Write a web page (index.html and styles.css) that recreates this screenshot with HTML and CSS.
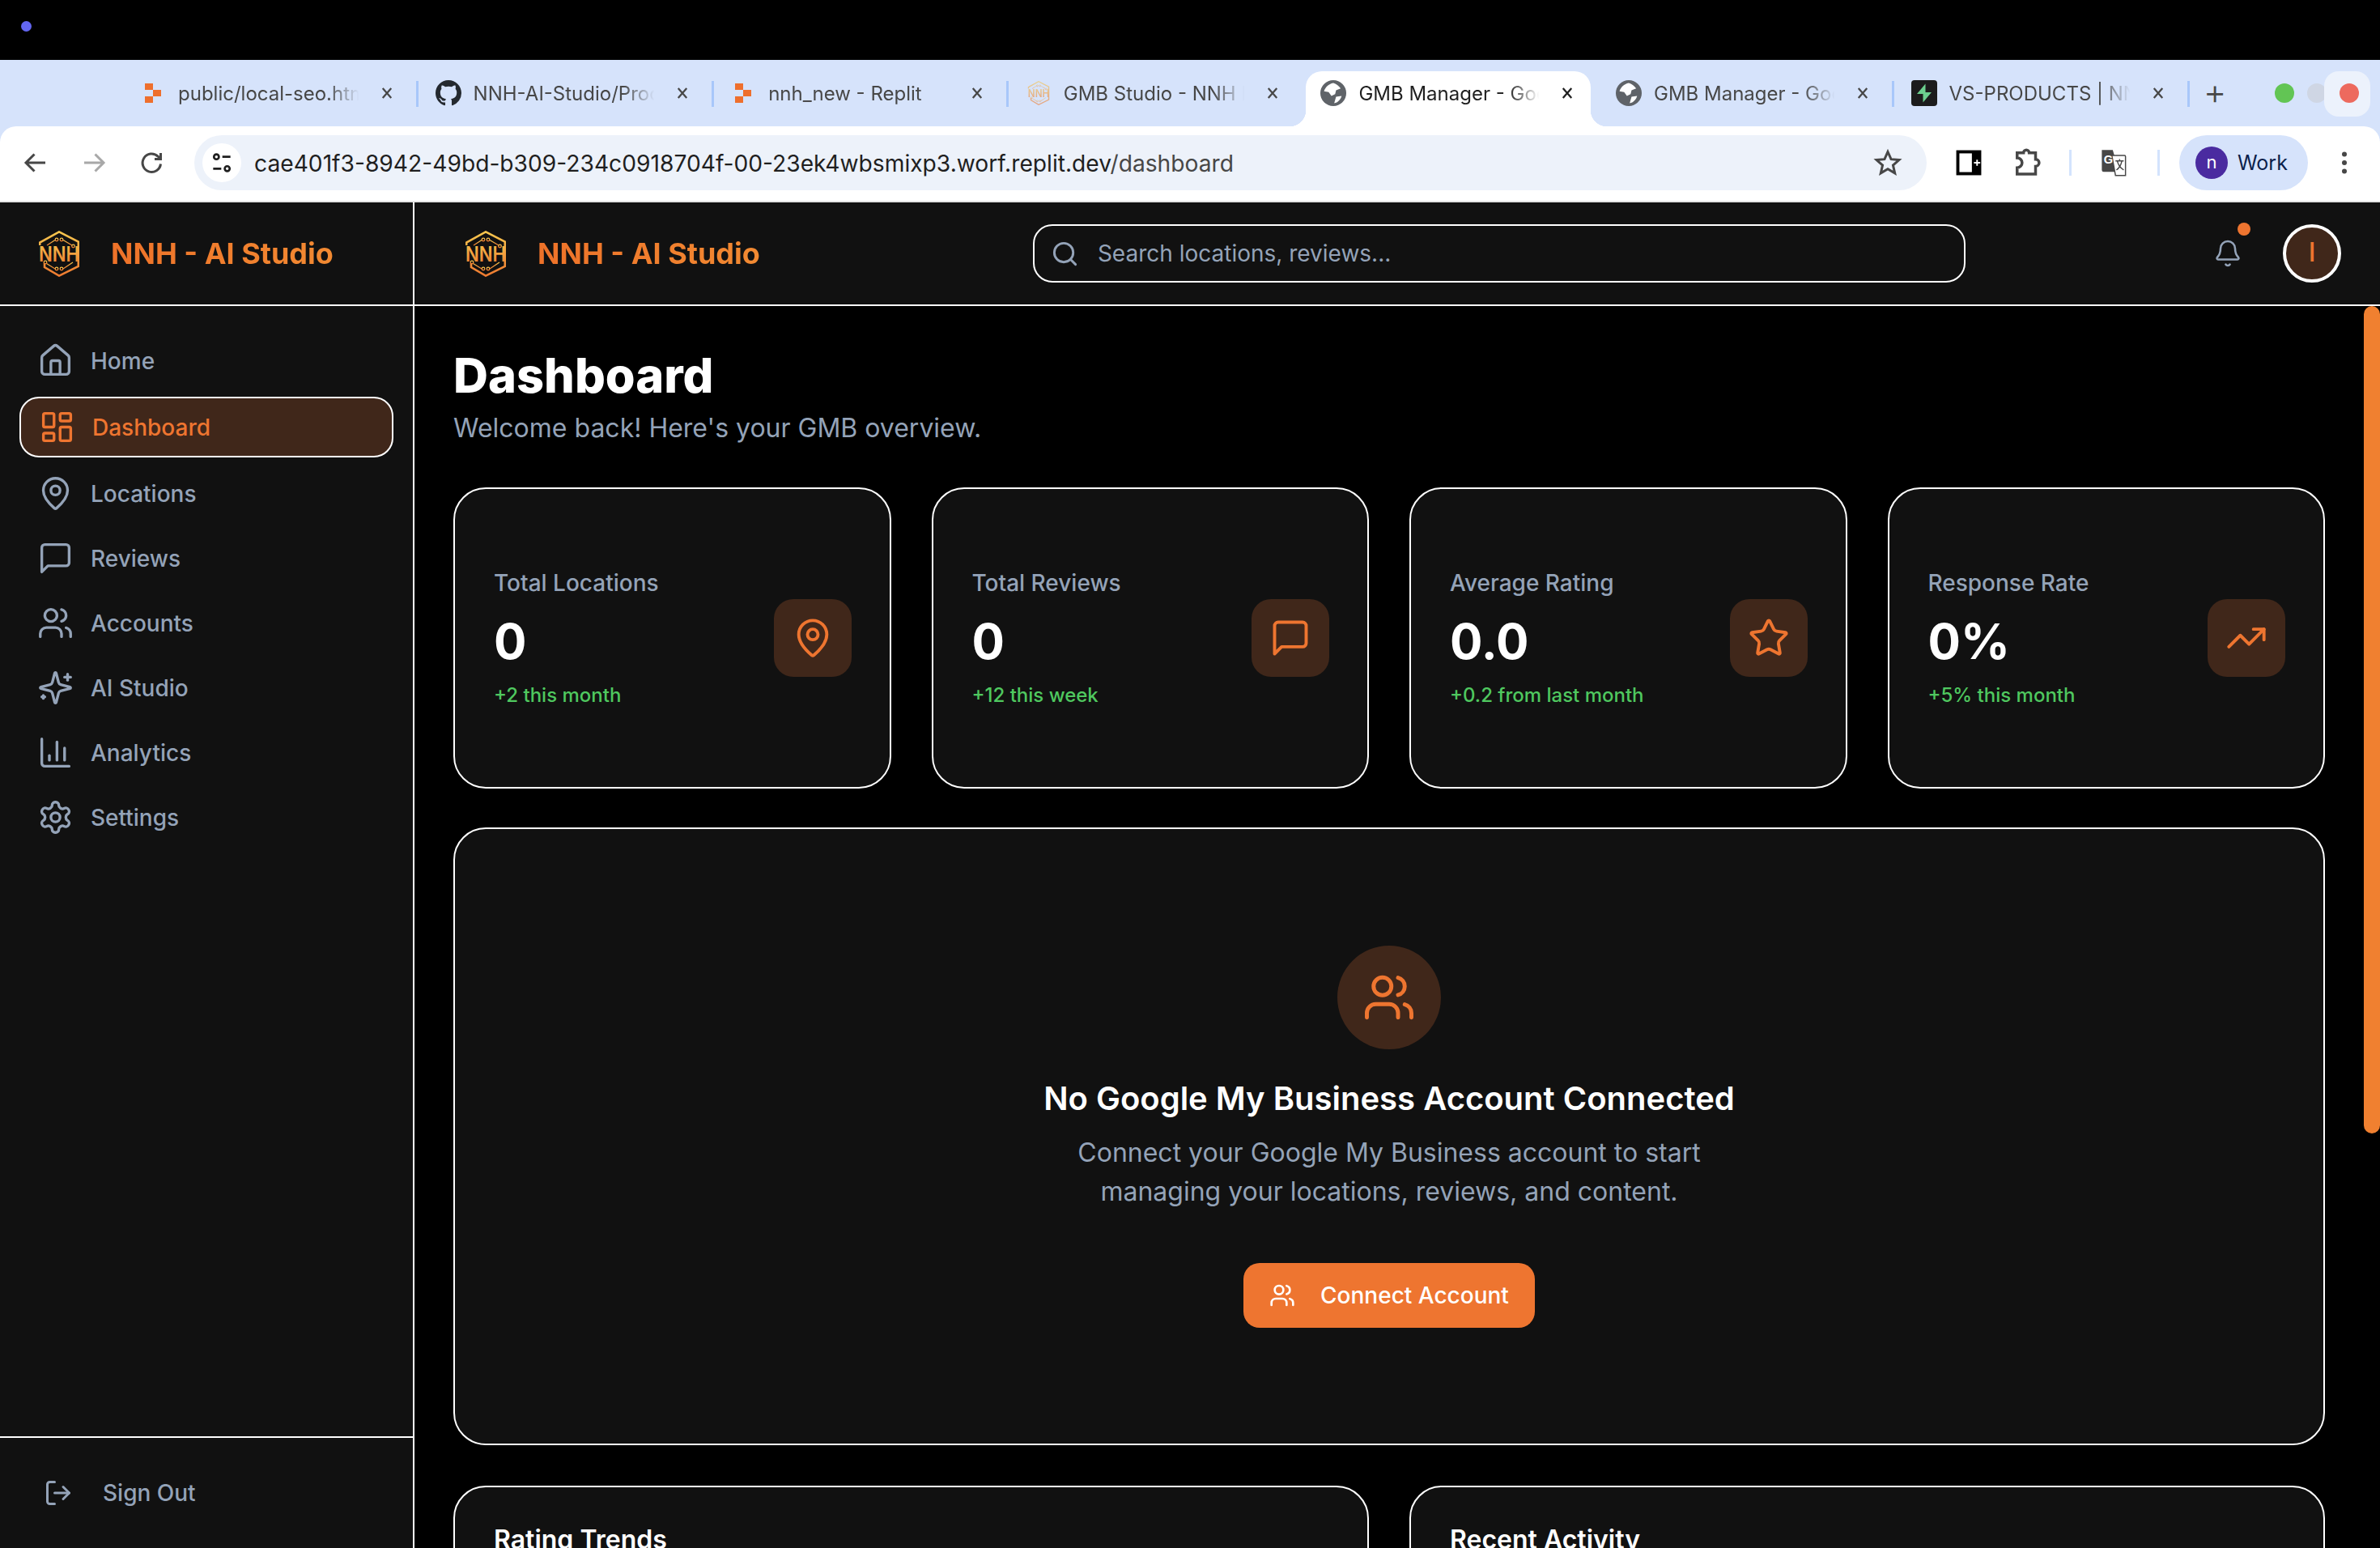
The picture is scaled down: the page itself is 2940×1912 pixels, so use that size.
FILE: index.html
```html
<!DOCTYPE html>
<html lang="en">

<head>
    <meta charset="UTF-8">
    <title>GMB Manager - Google My Business</title>
    <link rel="stylesheet" href="styles.css">
</head>

<body>
    <!-- shared icons -->
    <svg class="defs" aria-hidden="true">
        <defs>
            <linearGradient id="logoGrad" x1="0" y1="0" x2="0" y2="1">
                <stop offset="0" stop-color="#f7c64e" />
                <stop offset="1" stop-color="#ee7a30" />
            </linearGradient>
            <symbol id="logo" viewBox="0 0 50 57">
                <g fill="none" stroke="url(#logoGrad)" stroke-width="2.6">
                    <path d="M1.200 18V14.500L25 1.400 48.800 13.500V44L25 55.600 7 45V40" />
                    <g stroke-width="1.300">
                        <path d="M10 18l10-6.500M30 11.500L41 18" />
                        <path d="M9.500 40.500L20 47M30 47l12-8" />
                        <circle cx="22" cy="11" r="1.800" />
                        <circle cx="28" cy="11" r="1.800" />
                        <circle cx="42.500" cy="19" r="1.800" />
                        <circle cx="8" cy="39" r="1.800" />
                        <circle cx="22" cy="47" r="1.800" />
                        <circle cx="28" cy="47" r="1.800" />
                    </g>
                </g>
                <text class="logo-text" x="25" y="38" text-anchor="middle" textLength="50" lengthAdjust="spacingAndGlyphs">NNH</text>
            </symbol>
            <symbol id="i-home" viewBox="0 0 24 24">
                <path d="M3 10a2 2 0 0 1 .709-1.528l7-5.999a2 2 0 0 1 2.582 0l7 5.999A2 2 0 0 1 21 10v9a2 2 0 0 1-2 2H5a2 2 0 0 1-2-2z" />
                <path d="M15 21v-8a1 1 0 0 0-1-1h-4a1 1 0 0 0-1 1v8" />
            </symbol>
            <symbol id="i-dash" viewBox="0 0 24 24">
                <rect x="3" y="3" width="7" height="9" rx="1" />
                <rect x="14" y="3" width="7" height="5" rx="1" />
                <rect x="14" y="12" width="7" height="9" rx="1" />
                <rect x="3" y="16" width="7" height="5" rx="1" />
            </symbol>
            <symbol id="i-pin" viewBox="0 0 24 24">
                <path d="M20 10c0 4.993-5.539 10.193-7.399 11.799a1 1 0 0 1-1.202 0C9.539 20.193 4 14.993 4 10a8 8 0 0 1 16 0" />
                <circle cx="12" cy="10" r="3" />
            </symbol>
            <symbol id="i-msg" viewBox="0 0 24 24">
                <path d="M21 15a2 2 0 0 1-2 2H7l-4 4V5a2 2 0 0 1 2-2h14a2 2 0 0 1 2 2z" />
            </symbol>
            <symbol id="i-users" viewBox="0 0 24 24">
                <path d="M16 21v-2a4 4 0 0 0-4-4H6a4 4 0 0 0-4 4v2" />
                <circle cx="9" cy="7" r="4" />
                <path d="M22 21v-2a4 4 0 0 0-3-3.87" />
                <path d="M16 3.13a4 4 0 0 1 0 7.75" />
            </symbol>
            <symbol id="i-spark" viewBox="0 0 24 24">
                <path d="M9.937 15.5A2 2 0 0 0 8.5 14.063l-6.135-1.582a.5.5 0 0 1 0-.962L8.5 9.936A2 2 0 0 0 9.937 8.5l1.582-6.135a.5.5 0 0 1 .963 0L14.063 8.5A2 2 0 0 0 15.5 9.937l6.135 1.581a.5.5 0 0 1 0 .964L15.5 14.063a2 2 0 0 0-1.437 1.437l-1.582 6.135a.5.5 0 0 1-.963 0z" />
                <path d="M20 3v4" />
                <path d="M22 5h-4" />
                <path d="M4 17v2" />
                <path d="M5 18H3" />
            </symbol>
            <symbol id="i-chart" viewBox="0 0 24 24">
                <path d="M3 3v16a2 2 0 0 0 2 2h16" />
                <path d="M18 17V9" />
                <path d="M13 17V5" />
                <path d="M8 17v-3" />
            </symbol>
            <symbol id="i-gear" viewBox="0 0 24 24">
                <path d="M12.22 2h-.44a2 2 0 0 0-2 2v.18a2 2 0 0 1-1 1.73l-.43.25a2 2 0 0 1-2 0l-.15-.08a2 2 0 0 0-2.73.73l-.22.38a2 2 0 0 0 .73 2.73l.15.1a2 2 0 0 1 1 1.72v.51a2 2 0 0 1-1 1.74l-.15.09a2 2 0 0 0-.73 2.73l.22.38a2 2 0 0 0 2.73.73l.15-.08a2 2 0 0 1 2 0l.43.25a2 2 0 0 1 1 1.73V20a2 2 0 0 0 2 2h.44a2 2 0 0 0 2-2v-.18a2 2 0 0 1 1-1.73l.43-.25a2 2 0 0 1 2 0l.15.08a2 2 0 0 0 2.73-.73l.22-.39a2 2 0 0 0-.73-2.73l-.15-.08a2 2 0 0 1-1-1.74v-.5a2 2 0 0 1 1-1.74l.15-.09a2 2 0 0 0 .73-2.73l-.22-.38a2 2 0 0 0-2.73-.73l-.15.08a2 2 0 0 1-2 0l-.43-.25a2 2 0 0 1-1-1.73V4a2 2 0 0 0-2-2z" />
                <circle cx="12" cy="12" r="3" />
            </symbol>
            <symbol id="i-star" viewBox="0 0 24 24">
                <path d="M11.525 2.295a.53.53 0 0 1 .95 0l2.31 4.679a2.123 2.123 0 0 0 1.595 1.16l5.166.756a.53.53 0 0 1 .294.904l-3.736 3.638a2.123 2.123 0 0 0-.611 1.878l.882 5.14a.53.53 0 0 1-.771.56l-4.618-2.428a2.122 2.122 0 0 0-1.973 0L6.396 21.01a.53.53 0 0 1-.77-.56l.881-5.139a2.122 2.122 0 0 0-.611-1.879L2.16 9.795a.53.53 0 0 1 .294-.906l5.165-.755a2.122 2.122 0 0 0 1.597-1.16z" />
            </symbol>
            <symbol id="i-trend" viewBox="0 0 24 24">
                <polyline points="22 7 13.5 15.5 8.5 10.5 2 17" />
                <polyline points="16 7 22 7 22 13" />
            </symbol>
            <symbol id="i-search" viewBox="0 0 24 24">
                <path d="m21 21-4.34-4.34" />
                <circle cx="11" cy="11" r="8" />
            </symbol>
            <symbol id="i-bell" viewBox="0 0 24 24">
                <path d="M10.268 21a2 2 0 0 0 3.464 0" />
                <path d="M3.262 15.326A1 1 0 0 0 4 17h16a1 1 0 0 0 .74-1.673C19.41 13.956 18 12.499 18 8A6 6 0 0 0 6 8c0 4.499-1.411 5.956-2.738 7.326" />
            </symbol>
            <symbol id="i-out" viewBox="0 0 24 24">
                <path d="m16 17 5-5-5-5" />
                <path d="M21 12H9" />
                <path d="M9 21H5a2 2 0 0 1-2-2V5a2 2 0 0 1 2-2h4" />
            </symbol>
            <symbol id="i-x" viewBox="0 0 24 24">
                <path d="M5 4l14 16M19 4L5 20" />
            </symbol>
            <symbol id="f-replit" viewBox="0 0 20 24">
                <path fill="#ee6f2d" d="M0 0h10v8H0zM10 8h10v8H10zM0 16h10v8H0z" />
            </symbol>
            <symbol id="f-globe" viewBox="0 0 28 28">
                <circle cx="14" cy="14" r="14" fill="#5f6368" />
                <path fill="#fff" d="M14 3c3 1 6 3 8 6l-5 2-1 4-4 2-3-4-5-1c1-4 5-8 10-9zM17 18l6-1c-1 4-4 7-8 8z" />
            </symbol>
            <symbol id="f-github" viewBox="0 0 16 16">
                <path fill="#24292f" d="M8 0C3.58 0 0 3.58 0 8c0 3.54 2.29 6.53 5.47 7.59.4.07.55-.17.55-.38 0-.19-.01-.82-.01-1.49-2.01.37-2.53-.49-2.69-.94-.09-.23-.48-.94-.82-1.13-.28-.15-.68-.52-.01-.53.63-.01 1.08.58 1.23.82.72 1.21 1.87.87 2.33.66.07-.52.28-.87.51-1.07-1.78-.2-3.64-.89-3.64-3.95 0-.87.31-1.59.82-2.15-.08-.2-.36-1.02.08-2.12 0 0 .67-.21 2.2.82.64-.18 1.32-.27 2-.27s1.36.09 2 .27c1.53-1.04 2.2-.82 2.2-.82.44 1.1.16 1.92.08 2.12.51.56.82 1.27.82 2.15 0 3.07-1.87 3.75-3.65 3.95.29.25.54.73.54 1.48 0 1.07-.01 1.93-.01 2.2 0 .21.15.46.55.38A8.01 8.01 0 0 0 16 8c0-4.42-3.58-8-8-8z" />
            </symbol>
            <symbol id="f-bolt" viewBox="0 0 32 32">
                <rect width="32" height="32" rx="4" fill="#1c1c1c" />
                <path fill="#6ccf8e" d="M17.5 4.5v10.5h7.5L14.5 27.5V17H7z" />
            </symbol>
        </defs>
    </svg>

    <div class="os-bar"><span class="os-dot"></span></div>

    <div class="chrome">
        <div class="tabstrip">
            <div class="tab sep">
                <svg class="fav fav-replit"><use href="#f-replit" /></svg>
                <span class="tab-title">public/local-seo.htm</span>
                <svg class="tab-x"><use href="#i-x" /></svg>
            </div>
            <div class="tab sep">
                <svg class="fav"><use href="#f-github" /></svg>
                <span class="tab-title">NNH-AI-Studio/Proc</span>
                <svg class="tab-x"><use href="#i-x" /></svg>
            </div>
            <div class="tab sep">
                <svg class="fav fav-replit"><use href="#f-replit" /></svg>
                <span class="tab-title">nnh_new - Replit</span>
                <svg class="tab-x"><use href="#i-x" /></svg>
            </div>
            <div class="tab">
                <svg class="fav fav-logo"><use href="#logo" /></svg>
                <span class="tab-title">GMB Studio - NNH I</span>
                <svg class="tab-x"><use href="#i-x" /></svg>
            </div>
            <div class="tab active">
                <svg class="fav"><use href="#f-globe" /></svg>
                <span class="tab-title">GMB Manager - Goo</span>
                <svg class="tab-x"><use href="#i-x" /></svg>
            </div>
            <div class="tab sep">
                <svg class="fav"><use href="#f-globe" /></svg>
                <span class="tab-title">GMB Manager - Goo</span>
                <svg class="tab-x"><use href="#i-x" /></svg>
            </div>
            <div class="tab sep">
                <svg class="fav"><use href="#f-bolt" /></svg>
                <span class="tab-title">VS-PRODUCTS | NN</span>
                <svg class="tab-x"><use href="#i-x" /></svg>
            </div>
            <div class="tab-plus">+</div>
            <span class="win win-green"></span>
            <span class="win win-grey"></span>
            <span class="win-hover"><span class="win win-red"></span></span>
        </div>

        <div class="toolbar">
            <button class="tool">
                <svg viewBox="0 0 24 24"><path d="M20 12H4.5M11 5l-7 7 7 7" /></svg>
            </button>
            <button class="tool tool-off">
                <svg viewBox="0 0 24 24"><path d="M4 12h15.500M13 5l7 7-7 7" /></svg>
            </button>
            <button class="tool">
                <svg viewBox="0 0 24 24"><path d="M19 13a7.500 7.500 0 1 1-2.300-6.300L19 9M19 4v5h-5" /></svg>
            </button>
            <div class="omnibox">
                <span class="tune">
                    <svg viewBox="0 0 24 24"><circle cx="7" cy="6.500" r="2.300" /><path d="M12.500 6.500H20M4 17.500h7.500" /><circle cx="17" cy="17.500" r="2.300" /></svg>
                </span>
                <span class="url">cae401f3-8942-49bd-b309-234c0918704f-00-23ek4wbsmixp3.worf.replit.dev<span class="url-path">/dashboard</span></span>
                <svg class="omni-star" viewBox="0 0 24 24"><path d="M12 3l2.700 6.100 6.600.6-5 4.400 1.500 6.500L12 17.200l-5.800 3.400 1.500-6.500-5-4.400 6.600-.6z" /></svg>
            </div>
            <button class="tool tool-first tool-panel">
                <svg viewBox="0 0 28 28"><rect class="solid" x="2" y="2" width="24" height="24" /><rect class="hole" x="5" y="5" width="12" height="18" /><path class="plus" d="M19 14h6M22 11v6" /></svg>
            </button>
            <button class="tool tool-ext">
                <svg viewBox="0 0 24 24"><path d="M5 5h4.500a2 2 0 0 1 4 0H18v4.500a2.500 2.500 0 0 1 0 5V20H5v-4.500a3.500 3.500 0 0 0 0-7z" /></svg>
            </button>
            <span class="tool-sep"></span>
            <button class="tool">
                <svg viewBox="0 0 32 32">
                    <path class="solid" d="M3 2h12l7 24H5a2 2 0 0 1-2-2z" />
                    <path class="trans-card" d="M14 8h14a1 1 0 0 1 1 1v21H18z" />
                    <text class="trans-g" x="5" y="17">G</text>
                    <path class="trans-zh" d="M18 14h9M22.500 12v2M20 14c1 5 4 8 7 10M25 14c-1 5-3 8-6 10" />
                </svg>
            </button>
            <span class="tool-sep tool-sep-b"></span>
            <div class="profile">
                <span class="profile-dot">n</span>
                <span class="profile-name">Work</span>
            </div>
            <button class="tool tool-menu">
                <svg viewBox="0 0 24 24"><circle class="solid" cx="12" cy="5" r="2" /><circle class="solid" cx="12" cy="12" r="2" /><circle class="solid" cx="12" cy="19" r="2" /></svg>
            </button>
        </div>
    </div>

    <div class="app">
        <aside class="sidebar">
            <div class="brand brand-side">
                <svg class="logo"><use href="#logo" /></svg>
                <span class="brand-name">NNH - AI Studio</span>
            </div>
            <nav class="nav">
                <a class="nav-item"><svg class="ic"><use href="#i-home" /></svg>Home</a>
                <a class="nav-item active"><svg class="ic"><use href="#i-dash" /></svg>Dashboard</a>
                <a class="nav-item"><svg class="ic"><use href="#i-pin" /></svg>Locations</a>
                <a class="nav-item"><svg class="ic"><use href="#i-msg" /></svg>Reviews</a>
                <a class="nav-item"><svg class="ic"><use href="#i-users" /></svg>Accounts</a>
                <a class="nav-item"><svg class="ic"><use href="#i-spark" /></svg>AI Studio</a>
                <a class="nav-item"><svg class="ic"><use href="#i-chart" /></svg>Analytics</a>
                <a class="nav-item"><svg class="ic"><use href="#i-gear" /></svg>Settings</a>
            </nav>
            <div class="side-foot">
                <svg class="ic ic-out"><use href="#i-out" /></svg>
                <span>Sign Out</span>
            </div>
        </aside>

        <div class="main">
            <header class="topbar">
                <div class="brand">
                    <svg class="logo"><use href="#logo" /></svg>
                    <span class="brand-name">NNH - AI Studio</span>
                </div>
                <div class="search">
                    <svg class="ic ic-search"><use href="#i-search" /></svg>
                    <span>Search locations, reviews...</span>
                </div>
                <div class="bell">
                    <svg class="ic ic-bell"><use href="#i-bell" /></svg>
                    <span class="bell-dot"></span>
                </div>
                <div class="avatar">I</div>
            </header>

            <main class="content">
                <span class="scroll-thumb"></span>
                <h1 class="page-title">Dashboard</h1>
                <p class="page-sub">Welcome back! Here's your GMB overview.</p>

                <section class="stats">
                    <div class="card stat">
                        <div>
                            <div class="stat-label">Total Locations</div>
                            <div class="stat-value">0</div>
                            <div class="stat-delta">+2 this month</div>
                        </div>
                        <span class="stat-icon"><svg class="ic"><use href="#i-pin" /></svg></span>
                    </div>
                    <div class="card stat">
                        <div>
                            <div class="stat-label">Total Reviews</div>
                            <div class="stat-value">0</div>
                            <div class="stat-delta">+12 this week</div>
                        </div>
                        <span class="stat-icon"><svg class="ic"><use href="#i-msg" /></svg></span>
                    </div>
                    <div class="card stat">
                        <div>
                            <div class="stat-label">Average Rating</div>
                            <div class="stat-value">0.0</div>
                            <div class="stat-delta">+0.2 from last month</div>
                        </div>
                        <span class="stat-icon"><svg class="ic"><use href="#i-star" /></svg></span>
                    </div>
                    <div class="card stat">
                        <div>
                            <div class="stat-label">Response Rate</div>
                            <div class="stat-value">0%</div>
                            <div class="stat-delta">+5% this month</div>
                        </div>
                        <span class="stat-icon"><svg class="ic"><use href="#i-trend" /></svg></span>
                    </div>
                </section>

                <section class="card empty">
                    <span class="empty-icon"><svg class="ic"><use href="#i-users" /></svg></span>
                    <h2 class="empty-title">No Google My Business Account Connected</h2>
                    <p class="empty-text">Connect your Google My Business account to start managing your locations, reviews, and content.</p>
                    <button class="btn-connect"><svg class="ic"><use href="#i-users" /></svg>Connect Account</button>
                </section>

                <section class="lower">
                    <div class="card lower-card"><h3>Rating Trends</h3></div>
                    <div class="card lower-card"><h3>Recent Activity</h3></div>
                </section>
            </main>
        </div>
    </div>
</body>

</html>
```

FILE: styles.css
```css
/* Page frame */
html,
body {
    margin: 0;
    height: 1912px;
    overflow: hidden;
}

body {
    display: flex;
    flex-direction: column;
    background-color: #000;
    font-family: Inter, "Liberation Sans", sans-serif;
}

.defs {
    width: 0;
    height: 0;
    flex: none;
}

.os-bar {
    height: 74px;
    flex: none;
    display: flex;
    align-items: center;
    padding-left: 26px;
    background-color: #000;
}

.os-dot {
    width: 13px;
    height: 13px;
    margin-top: -10px;
    border-radius: 50%;
    background-color: #6366f1;
}

/* Browser tabs */
.chrome {
    flex: none;
    background-color: #d6e3fb;
}

.tabstrip {
    height: 82px;
    display: flex;
    align-items: flex-start;
    padding: 14px 0 0 155px;
    box-sizing: border-box;
}

.tab {
    position: relative;
    flex: none;
    width: 364.6px;
    height: 68px;
    box-sizing: border-box;
    padding: 0 0 14px 18px;
    display: grid;
    grid-template-columns: 32px 228px 18px;
    column-gap: 15px;
    align-items: center;
    color: #474747;
    font-size: 24px;
}

.tab.sep::after {
    content: "";
    position: absolute;
    left: 359px;
    top: 12px;
    width: 3px;
    height: 32px;
    background-color: #a8c7fa;
}

.tab.active {
    width: 352px;
    margin: 0 12.6px 0 0;
    border-radius: 20px 20px 0 0;
    background-color: #fff;
    color: #1f1f1f;
}

.tab.active::before,
.tab.active::after {
    content: "";
    position: absolute;
    bottom: 0;
    width: 20px;
    height: 20px;
}

.tab.active::before {
    left: -20px;
    background: radial-gradient(circle at 0 0, transparent 20px, #fff 20.5px);
}

.tab.active::after {
    right: -20px;
    background: radial-gradient(circle at 100% 0, transparent 20px, #fff 20.5px);
}

.fav {
    width: 32px;
    height: 32px;
}

.fav-replit {
    height: 24px;
}

.fav-logo {
    height: 30px;
    opacity: 0.6;
}

.tab-title {
    white-space: nowrap;
    overflow: hidden;
    -webkit-mask-image: linear-gradient(to right, #000 81%, transparent 98%);
    mask-image: linear-gradient(to right, #000 81%, transparent 98%);
}

.tab-x {
    width: 18px;
    height: 18px;
    margin-left: 6px;
    fill: none;
    stroke: currentColor;
    stroke-width: 3;
}

.tab-plus {
    width: 58px;
    height: 54px;
    line-height: 50px;
    text-align: center;
    color: #474747;
    font-size: 44px;
    font-weight: 300;
}

.win {
    flex: none;
    width: 24px;
    height: 24px;
    margin-top: 15px;
    border-radius: 50%;
}

.win-green {
    margin-left: 45px;
    background-color: #62c554;
}

.win-grey {
    margin-left: 16px;
    background-color: #cfd6e4;
}

.win-hover {
    width: 57px;
    height: 56px;
    margin-left: -3px;
    display: flex;
    justify-content: center;
    border-radius: 18px;
    background-color: #ecf2fc;
}

.win-red {
    background-color: #ed6a5e;
    margin-left: 5px;
}

/* Browser toolbar */
.toolbar {
    height: 94px;
    box-sizing: border-box;
    display: flex;
    align-items: center;
    padding: 0 0 2px 8px;
    border-radius: 20px 20px 0 0;
    border-bottom: 2px solid #e4e4e4;
    background-color: #fff;
}

.tool {
    flex: none;
    width: 72px;
    height: 72px;
    padding: 0;
    border: none;
    background: none;
    display: flex;
    align-items: center;
    justify-content: center;
    color: #474747;
}

.tool svg {
    width: 36px;
    height: 36px;
    fill: none;
    stroke: currentColor;
    stroke-width: 2;
}

.tool .solid {
    fill: currentColor;
    stroke: none;
}

.tool .hole {
    fill: #fff;
    stroke: none;
}

.tool .plus {
    stroke: #fff;
    stroke-width: 1.500;
}

.tool .trans-card {
    fill: #fff;
    stroke-width: 1.300;
}

.tool .trans-g {
    fill: #fff;
    stroke: none;
    font-size: 13px;
    font-weight: 700;
}

.tool .trans-zh {
    stroke-width: 1.200;
}

.tool-off {
    color: #a8a8a8;
}

.tool-first {
    margin-left: 16px;
}

.tool-panel {
    color: #000;
}

.tool-ext svg {
    width: 42px;
    height: 42px;
}

.tool-sep {
    flex: none;
    width: 3px;
    height: 32px;
    margin: 0 16px;
    background-color: #d3e3fd;
}

.tool-sep-b {
    margin: 0 24px 0 18px;
}

.tool-menu {
    margin-left: 9px;
}

.omnibox {
    flex: none;
    width: 2140px;
    height: 68px;
    margin-left: 16px;
    box-sizing: border-box;
    padding: 0 30px 0 10px;
    display: flex;
    align-items: center;
    border-radius: 34px;
    background-color: #edf2fa;
}

.tune {
    flex: none;
    width: 48px;
    height: 48px;
    border-radius: 50%;
    background-color: #fff;
    display: flex;
    align-items: center;
    justify-content: center;
}

.tune svg {
    width: 32px;
    height: 32px;
    fill: none;
    stroke: #1f1f1f;
    stroke-width: 2;
}

.url {
    flex: 1;
    margin-left: 16px;
    padding-top: 2px;
    color: #1f1f1f;
    font-size: 28.2px;
}

.url-path {
    color: #474747;
}

.omni-star {
    width: 36px;
    height: 36px;
    fill: none;
    stroke: #474747;
    stroke-width: 2;
}

.profile {
    flex: none;
    width: 159px;
    height: 68px;
    box-sizing: border-box;
    padding-left: 20px;
    display: flex;
    align-items: center;
    gap: 12px;
    border-radius: 34px;
    background-color: #d6e3fb;
}

.profile-dot {
    width: 40px;
    height: 40px;
    border-radius: 50%;
    background-color: #4a2ba0;
    color: #fff;
    font-size: 22px;
    line-height: 38px;
    text-align: center;
}

.profile-name {
    color: #0b1f4b;
    font-size: 25px;
}

/* App shell */
.app {
    flex: 1;
    min-height: 0;
    display: flex;
}

.sidebar {
    flex: none;
    width: 512px;
    box-sizing: border-box;
    display: flex;
    flex-direction: column;
    border-right: 2px solid #fff;
    background-color: #111;
}

.brand {
    display: flex;
    align-items: center;
    gap: 39px;
}

.brand-side {
    height: 128px;
    flex: none;
    box-sizing: border-box;
    padding-left: 48px;
    border-bottom: 2px solid #fff;
}

.logo {
    width: 50px;
    height: 57px;
}

.logo-text {
    fill: url(#logoGrad);
    font-family: Inter, sans-serif;
    font-size: 26px;
    font-weight: 600;
}

.brand-name {
    background: linear-gradient(to right, #ee7229, #f28a32);
    -webkit-background-clip: text;
    background-clip: text;
    color: transparent;
    font-size: 36px;
    font-weight: 700;
}

.ic {
    fill: none;
    stroke: currentColor;
    stroke-width: 2;
    stroke-linecap: round;
    stroke-linejoin: round;
}

.nav {
    display: flex;
    flex-direction: column;
    gap: 9px;
    padding: 32px 24px 0;
}

.nav-item {
    height: 71px;
    display: flex;
    align-items: center;
    gap: 21px;
    padding-left: 22px;
    color: #94a3b8;
    font-size: 28px;
    font-weight: 500;
}

.nav-item .ic {
    flex: none;
    width: 45px;
    height: 45px;
    stroke-width: 1.800;
}

.nav-item.active {
    height: 75px;
    margin: 0;
    box-sizing: border-box;
    border: 2px solid #fff;
    border-radius: 24px;
    background-color: #40271a;
    color: #ee7530;
}

.side-foot {
    margin-top: auto;
    height: 138px;
    box-sizing: border-box;
    display: flex;
    align-items: center;
    gap: 37px;
    padding-left: 54px;
    border-top: 2px solid #fff;
    color: #94a3b8;
    font-size: 28px;
    font-weight: 500;
}

.ic-out {
    width: 36px;
    height: 36px;
}

/* Top bar */
.main {
    flex: 1;
    min-width: 0;
    display: flex;
    flex-direction: column;
}

.topbar {
    height: 128px;
    flex: none;
    box-sizing: border-box;
    display: flex;
    align-items: center;
    padding: 0 48px 0 63px;
    border-bottom: 2px solid #fff;
    background-color: #111;
}

.search {
    width: 1152px;
    height: 72px;
    margin-left: 337px;
    box-sizing: border-box;
    display: flex;
    align-items: center;
    gap: 23px;
    padding-left: 20px;
    border: 2px solid #fff;
    border-radius: 24px;
    color: #94a3b8;
    font-size: 28px;
}

.ic-search {
    width: 35px;
    height: 35px;
}

.bell {
    position: relative;
    width: 36px;
    height: 36px;
    margin-left: auto;
    color: #94a3b8;
}

.ic-bell {
    width: 36px;
    height: 36px;
    stroke-width: 1.700;
}

.bell-dot {
    position: absolute;
    right: -10px;
    top: -20px;
    width: 16px;
    height: 16px;
    border-radius: 50%;
    background-color: #ee7530;
}

.avatar {
    width: 72px;
    height: 72px;
    margin-left: 50px;
    box-sizing: border-box;
    border: 4px solid #fff;
    border-radius: 50%;
    background-color: #40271a;
    color: #ee7530;
    font-size: 32px;
    font-weight: 500;
    line-height: 62px;
    text-align: center;
}

/* Content */
.content {
    position: relative;
    flex: 1;
    min-height: 0;
    overflow: hidden;
    padding: 51px 68px 0 48px;
}

.scroll-thumb {
    position: absolute;
    right: 0;
    top: 0;
    width: 20px;
    height: 1022px;
    border-radius: 10px;
    background-color: #f08030;
}

.page-title {
    margin: 0;
    color: #fff;
    font-size: 59.5px;
    font-weight: 800;
    line-height: 68px;
}

.page-sub {
    margin: 9px 0 0;
    color: #94a3b8;
    font-size: 32px;
    line-height: 45px;
}

.card {
    box-sizing: border-box;
    border: 2px solid #fff;
    border-radius: 40px;
    background-color: #111;
}

.stats {
    display: grid;
    grid-template-columns: repeat(4, 1fr);
    gap: 50px;
    margin-top: 51px;
}

.stat {
    height: 372px;
    display: flex;
    align-items: center;
    justify-content: space-between;
    padding: 2px 47px 0 48px;
}

.stat-label {
    color: #94a3b8;
    font-size: 28px;
    font-weight: 500;
    line-height: 38px;
}

.stat-value {
    margin-top: 18px;
    color: #fff;
    font-size: 60px;
    font-weight: 700;
    line-height: 70px;
}

.stat-delta {
    margin-top: 14px;
    color: #4fc85f;
    font-size: 24px;
    font-weight: 500;
    line-height: 36px;
}

.stat-icon {
    flex: none;
    width: 96px;
    height: 96px;
    margin-top: -2px;
    display: flex;
    align-items: center;
    justify-content: center;
    border-radius: 24px;
    background-color: #40271a;
    color: #ee7530;
}

.stat-icon .ic {
    width: 52px;
    height: 52px;
    stroke-width: 1.800;
}

.empty {
    height: 763px;
    margin-top: 48px;
    padding-top: 144px;
    display: flex;
    flex-direction: column;
    align-items: center;
}

.empty-icon {
    width: 128px;
    height: 128px;
    display: flex;
    align-items: center;
    justify-content: center;
    border-radius: 50%;
    background-color: #40271a;
    color: #ee7530;
}

.empty-icon .ic {
    width: 66px;
    height: 66px;
    stroke-width: 1.800;
}

.empty-title {
    margin: 33px 0 0;
    color: #fff;
    font-size: 40px;
    font-weight: 600;
    line-height: 56px;
}

.empty-text {
    width: 840px;
    margin: 15px 0 0;
    color: #94a3b8;
    font-size: 32px;
    line-height: 48px;
    text-align: center;
}

.btn-connect {
    width: 360px;
    height: 80px;
    margin-top: 64px;
    display: flex;
    align-items: center;
    justify-content: center;
    gap: 31px;
    border: none;
    border-radius: 20px;
    background-color: #ee7530;
    color: #fff;
    font-family: inherit;
    font-size: 28px;
    font-weight: 500;
}

.btn-connect .ic {
    width: 32px;
    height: 32px;
}

.lower {
    display: grid;
    grid-template-columns: repeat(2, 1fr);
    gap: 50px;
    margin-top: 50px;
}

.lower-card {
    height: 400px;
    padding: 45px 48px;
}

.lower-card h3 {
    margin: 0;
    color: #fff;
    font-size: 32px;
    font-weight: 600;
}
```
